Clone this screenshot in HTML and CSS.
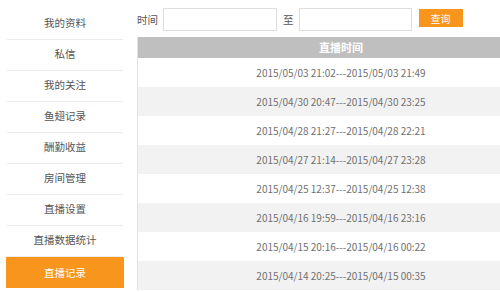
FILE: index.html
```html
<!DOCTYPE html>
<html lang="zh-CN">
<head>
<meta charset="utf-8">
<title>直播记录</title>
<link rel="stylesheet" href="styles.css">
</head>
<body>
<div class="page">
  <nav class="side">
    <a class="item">我的资料</a>
    <a class="item">私信</a>
    <a class="item">我的关注</a>
    <a class="item">鱼翅记录</a>
    <a class="item">酬勤收益</a>
    <a class="item">房间管理</a>
    <a class="item">直播设置</a>
    <a class="item">直播数据统计</a>
    <a class="item active">直播记录</a>
  </nav>
  <main class="main">
    <div class="search">
      <span class="lbl">时间</span>
      <input class="inp" type="text">
      <span class="to">至</span>
      <input class="inp inp2" type="text">
      <button class="btn" type="button">查询</button>
    </div>
    <div class="table">
      <div class="th">直播时间</div>
      <div class="tr">2015/05/03 21:02---2015/05/03 21:49</div>
      <div class="tr alt">2015/04/30 20:47---2015/04/30 23:25</div>
      <div class="tr">2015/04/28 21:27---2015/04/28 22:21</div>
      <div class="tr alt">2015/04/27 21:14---2015/04/27 23:28</div>
      <div class="tr">2015/04/25 12:37---2015/04/25 12:38</div>
      <div class="tr alt">2015/04/16 19:59---2015/04/16 23:16</div>
      <div class="tr">2015/04/15 20:16---2015/04/16 00:22</div>
      <div class="tr alt">2015/04/14 20:25---2015/04/15 00:35</div>
    </div>
  </main>
</div>
</body>
</html>
```
FILE: styles.css
```css
html, body {
  margin: 0;
  padding: 0;
  background: #fff;
  overflow: hidden;
}
body {
  font-family: "Noto Sans CJK SC", "Noto Sans", sans-serif;
  width: 500px;
  height: 292px;
}
.page {
  display: flex;
  align-items: flex-start;
  padding: 8px 0 0 6px;
}
.side {
  width: 118px;
  flex: none;
  display: flex;
  flex-direction: column;
  padding-top: 1px;
}
.item {
  height: 30px;
  line-height: 28px;
  margin: 0 1px;
  border-bottom: 1px solid #ececec;
  text-align: center;
  font-size: 10.5px;
  color: #555;
}
.item.active {
  margin: 0;
  height: 31px;
  line-height: 31px;
  border-bottom: none;
  background: #f8951d;
  color: #fff;
}
.main {
  margin-left: 13px;
  flex: none;
  width: 407px;
}
.search {
  display: flex;
  align-items: center;
  height: 23px;
  font-size: 10.5px;
  color: #555;
}
.lbl {
  flex: none;
  white-space: nowrap;
  margin-right: 5px;
}
.inp {
  box-sizing: border-box;
  flex: none;
  width: 114px;
  height: 23px;
  border: 1px solid #ddd;
  margin: 0;
  padding: 0;
  background: #fff;
}
.to {
  flex: none;
  margin: 0 5px 0 6px;
}
.inp2 {
  width: 113px;
}
.btn {
  flex: none;
  margin: 0 0 3px 7px;
  width: 44px;
  height: 18px;
  padding: 0;
  border: none;
  background: #f8951d;
  color: #fff;
  font-family: inherit;
  font-size: 10px;
}
.table {
  margin-top: 6px;
  width: 406px;
  border-left: 1px solid #e3e3e3;
}
.th {
  height: 21px;
  line-height: 21px;
  background: #bfbfbf;
  color: #fff;
  font-weight: bold;
  font-size: 11px;
  text-align: center;
}
.tr {
  height: 29px;
  line-height: 29px;
  text-align: center;
  font-size: 10px;
  color: #707070;
}
.tr.alt {
  background: #f2f2f2;
}
```
